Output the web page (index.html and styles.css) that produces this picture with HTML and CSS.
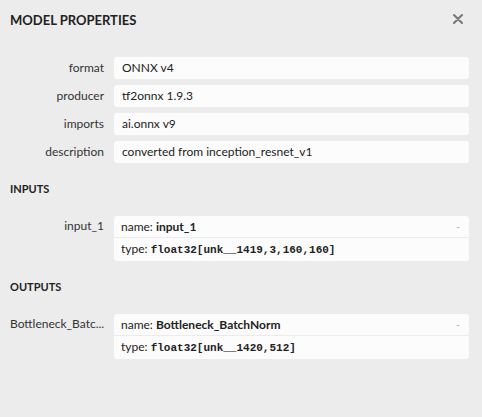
FILE: index.html
```html
<!DOCTYPE html>
<html lang="en">
<head>
    <meta charset="UTF-8">
    <meta name="viewport" content="width=device-width, initial-scale=1.0">
    <title>Model Properties</title>
    <link rel="stylesheet" href="styles.css">
</head>
<body>

    <div class="sidebar">
        <div class="header">
            <div class="title">MODEL PROPERTIES</div>
            <div class="close">
                <svg width="10" height="10" viewBox="0 0 10 10">
                    <path d="M1 1 L9 9 M9 1 L1 9" stroke="#777" stroke-width="2" stroke-linecap="round"/>
                </svg>
            </div>
        </div>

        <div class="rows">
            <div class="row">
                <div class="label">format</div>
                <div class="value">ONNX v4</div>
            </div>
            <div class="row">
                <div class="label">producer</div>
                <div class="value">tf2onnx 1.9.3</div>
            </div>
            <div class="row">
                <div class="label">imports</div>
                <div class="value">ai.onnx v9</div>
            </div>
            <div class="row">
                <div class="label">description</div>
                <div class="value">converted from inception_resnet_v1</div>
            </div>
        </div>

        <div class="section">INPUTS</div>
        <div class="row">
            <div class="label label-top">input_1</div>
            <div class="argument">
                <div class="arg-line">
                    <span>name: <b>input_1</b></span>
                    <span class="toggle">-</span>
                </div>
                <div class="arg-line">
                    <span>type: <code>float32[unk__1419,3,160,160]</code></span>
                </div>
            </div>
        </div>

        <div class="section">OUTPUTS</div>
        <div class="row">
            <div class="label label-top" title="Bottleneck_BatchNorm">Bottleneck_Batc...</div>
            <div class="argument">
                <div class="arg-line">
                    <span>name: <b>Bottleneck_BatchNorm</b></span>
                    <span class="toggle">-</span>
                </div>
                <div class="arg-line">
                    <span>type: <code>float32[unk__1420,512]</code></span>
                </div>
            </div>
        </div>
    </div>

</body>
</html>
```

FILE: styles.css
```css
body {
    margin: 0;
    font-family: Lato, "Noto Sans", sans-serif;
    font-size: 12px;
    background-color: #ececec;
    color: #333;
}
.sidebar {
    padding: 10px 13px 0 10px;
}
.header {
    display: flex;
    justify-content: space-between;
    align-items: center;
    height: 20px;
}
.title {
    font-size: 13px;
    font-weight: bold;
    color: #222;
    line-height: 20px;
}
.close {
    display: flex;
    margin-right: 6px;
    margin-top: -3px;
}
.rows {
    display: flex;
    flex-direction: column;
    gap: 6px;
    margin-top: 27px;
}
.row {
    display: flex;
}
.label {
    width: 104px;
    flex-shrink: 0;
    box-sizing: border-box;
    padding-right: 10px;
    text-align: right;
    line-height: 22px;
    white-space: nowrap;
}
.label-top {
    line-height: 20px;
}
.value {
    flex: 1;
    background-color: #fcfcfc;
    border-radius: 3px;
    padding: 0 8px;
    line-height: 22px;
    color: #222;
}
.section {
    font-size: 11px;
    font-weight: bold;
    color: #222;
    line-height: 20px;
    margin: 16px 0 17px 0;
}
.argument {
    flex: 1;
    min-width: 0;
    background-color: #fcfcfc;
    border-radius: 3px;
    color: #222;
}
.arg-line {
    display: flex;
    justify-content: space-between;
    padding: 0 7px;
    line-height: 21px;
}
.arg-line + .arg-line {
    border-top: 1px solid #ececec;
}
.arg-line b {
    font-weight: bold;
}
.arg-line code {
    font-family: "Liberation Mono", monospace;
    font-size: 11px;
    font-weight: bold;
}
.toggle {
    color: #aaa;
    font-size: 10px;
    padding-right: 2px;
}
```
